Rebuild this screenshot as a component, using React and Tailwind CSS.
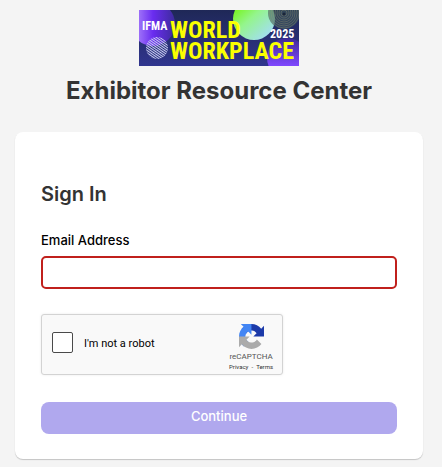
import React, { useState } from "react";

const EventBanner = () => (
    <svg
        viewBox="0 0 160 56"
        className="w-40 h-14"
        role="img"
        aria-label="IFMA World Workplace 2025"
    >
        <defs>
            <linearGradient id="bannerBg" x1="0" y1="0" x2="0" y2="1">
                <stop offset="0" stopColor="#1f2857" />
                <stop offset="1" stopColor="#30358e" />
            </linearGradient>
            <linearGradient id="purpleBall" x1="0" y1="0" x2="1" y2="0">
                <stop offset="0.2" stopColor="#9a6cf8" />
                <stop offset="0.5" stopColor="#6a2cf0" />
                <stop offset="1" stopColor="#3d2b9c" />
            </linearGradient>
            <linearGradient id="greenBall" x1="0.1" y1="0.2" x2="0.8" y2="1">
                <stop offset="0" stopColor="#76f51c" />
                <stop offset="0.4" stopColor="#94f58c" />
                <stop offset="1" stopColor="#a4dcfa" />
            </linearGradient>
            <linearGradient id="cornerBall" x1="0" y1="0" x2="0" y2="1">
                <stop offset="0" stopColor="#3e2b98" />
                <stop offset="0.7" stopColor="#8048ff" />
            </linearGradient>
            <pattern id="stripes" width="4" height="2" patternUnits="userSpaceOnUse" patternTransform="rotate(35)">
                <rect width="4" height="1" fill="#c9cdf0" />
            </pattern>
            <clipPath id="bannerClip">
                <rect width="160" height="56" />
            </clipPath>
        </defs>
        <g clipPath="url(#bannerClip)">
            <rect width="160" height="56" fill="url(#bannerBg)" />
            <circle cx="14" cy="14" r="22" fill="url(#purpleBall)" />
            <circle cx="18" cy="38" r="11" fill="url(#stripes)" />
            <circle cx="148" cy="48" r="20" fill="url(#cornerBall)" />
            <circle cx="115" cy="9" r="21" fill="url(#greenBall)" />
            <circle cx="145" cy="3" r="16" fill="#3f5a5c" opacity="0.6" />
            <g fill="none" stroke="#9a9b72" strokeWidth="0.5" opacity="0.7">
                <circle cx="145" cy="3" r="3" />
                <circle cx="145" cy="3" r="5" />
                <circle cx="145" cy="3" r="7" />
                <circle cx="145" cy="3" r="9" />
                <circle cx="145" cy="3" r="11" />
                <circle cx="145" cy="3" r="13" />
                <circle cx="145" cy="3" r="15" />
            </g>
            <circle cx="145" cy="4" r="1.5" fill="#1b2538" />
            <g fontFamily="'Roboto Condensed', 'Roboto', sans-serif" fontWeight="700">
                <text x="3" y="20" fontSize="12" fill="#ffffff">IFMA</text>
                <text x="31" y="28" fontSize="24" fill="#faff00">WORLD</text>
                <text x="31" y="49" fontSize="24" fill="#faff00">WORKPLACE</text>
                <text x="131" y="28" fontSize="12" fill="#ffffff">2025</text>
            </g>
        </g>
    </svg>
);

const RecaptchaLogo = () => (
    <svg viewBox="0 0 64 64" className="w-[25px] h-[25px]" aria-hidden="true">
        <path
            fill="#1c3aa9"
            d="M64 31.955l-.033-1.37V4.687l-7.16 7.16C50.948 4.674 42.033.093 32.05.093c-10.4 0-19.622 4.96-25.458 12.64l11.736 11.86a15.55 15.55 0 0 1 4.754-5.334c2.05-1.6 4.952-2.906 8.968-2.906.485 0 .86.057 1.135.163 4.976.393 9.288 3.14 11.828 7.124l-8.307 8.307L64 31.953"
        />
        <path
            fill="#4285f4"
            d="M31.862.094l-1.37.033H4.594l7.16 7.16C4.58 13.147 0 22.06 0 32.046c0 10.4 4.96 19.622 12.64 25.458L24.5 45.768a15.55 15.55 0 0 1-5.334-4.754c-1.6-2.05-2.906-4.952-2.906-8.968 0-.485.057-.86.163-1.135.393-4.976 3.14-9.288 7.124-11.828l8.307 8.307L31.86.095"
        />
        <path
            fill="#ababab"
            d="M.001 32.045l.033 1.37v25.898l7.16-7.16c5.86 7.173 14.774 11.754 24.76 11.754 10.4 0 19.622-4.96 25.458-12.64l-11.736-11.86a15.55 15.55 0 0 1-4.754 5.334c-2.05 1.6-4.952 2.906-8.968 2.906-.485 0-.86-.057-1.135-.163-4.976-.393-9.288-3.14-11.828-7.124l8.307-8.307c-10.522.04-22.4.066-27.295-.005"
        />
    </svg>
);

const App = () => {
    const [email, setEmail] = useState("");
    const [isHuman, setIsHuman] = useState(false);

    const handleSubmit = (e) => {
        e.preventDefault();
    };

    return (
        <div className="min-h-screen bg-[#f4f4f4] pt-[10px] pb-2 pl-[15px] pr-[19px] font-['Inter',sans-serif]">
            <header className="flex flex-col items-center">
                <EventBanner />
                <h1 className="mt-2 text-2xl leading-[34px] font-bold text-[#333333] whitespace-nowrap">
                    Exhibitor Resource Center
                </h1>
            </header>

            <main className="mt-6 rounded-lg bg-white px-[26px] pt-12 pb-[25px] shadow-[0_1px_1px_rgba(0,0,0,0.2)]">
                <h2 className="text-xl leading-7 font-semibold text-[#333333]">Sign In</h2>

                <form onSubmit={handleSubmit}>
                    <label htmlFor="email" className="mt-[22px] block text-[13px] leading-5 font-medium text-black">
                        Email Address
                    </label>
                    <input
                        id="email"
                        type="email"
                        value={email}
                        onChange={(e) => setEmail(e.target.value)}
                        className="mt-[6px] block h-[33px] w-full rounded-[5px] border-2 border-[#c0201c] bg-white px-2 text-sm focus:outline-none"
                    />

                    <div className="mt-[25px] flex h-[61px] w-[242px] justify-between rounded-[3px] border border-[#d3d3d3] bg-[#f9f9f9] pl-[10px] pr-[9px] font-['Roboto',sans-serif] shadow-[0_0_3px_rgba(0,0,0,0.08)]">
                        <div className="flex items-start gap-[11px] pt-[17px] text-[11px] leading-6 text-black">
                            <input
                                id="robot"
                                type="checkbox"
                                checked={isHuman}
                                onChange={(e) => setIsHuman(e.target.checked)}
                                className="h-[21px] w-[21px] appearance-none rounded-[2px] border border-[#4a4a4a] bg-white checked:bg-[#4285f4]"
                            />
                            <label htmlFor="robot">I'm not a robot</label>
                        </div>
                        <div className="flex flex-col items-center pt-[9px] text-[#555555]">
                            <RecaptchaLogo />
                            <span className="mt-[3px] text-[8px] leading-[10px]">reCAPTCHA</span>
                            <span className="flex gap-[3px] text-[6px] leading-[10px] text-[#333333]">
                                <a href="#privacy">Privacy</a>
                                <span aria-hidden="true">-</span>
                                <a href="#terms">Terms</a>
                            </span>
                        </div>
                    </div>

                    <button
                        type="submit"
                        className="mt-[27px] block h-8 w-full rounded-lg bg-[#b0a8ee] pb-1 text-[13px] leading-5 font-medium text-white"
                    >
                        Continue
                    </button>
                </form>
            </main>
        </div>
    );
};

export default App;
